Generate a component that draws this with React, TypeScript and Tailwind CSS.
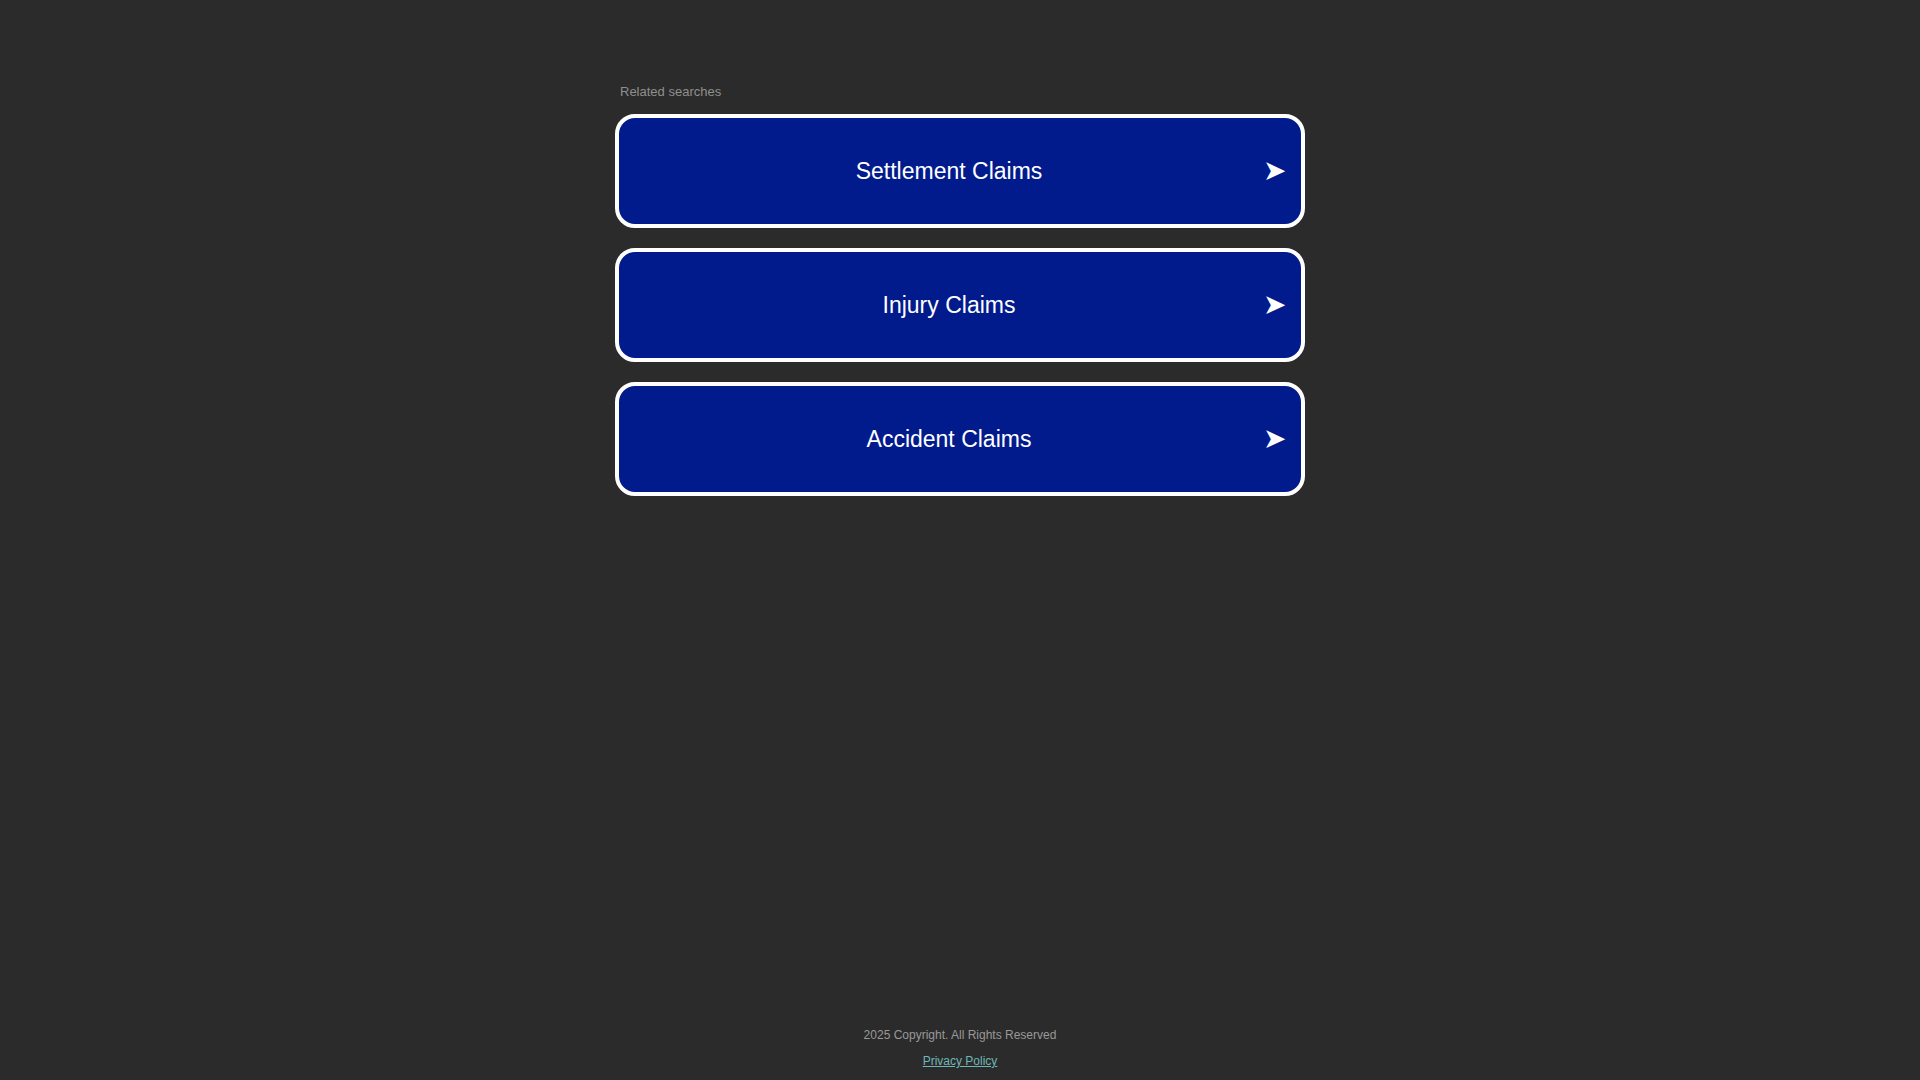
import React from "react";

const links = ["Settlement Claims", "Injury Claims", "Accident Claims"];

const App: React.FC = () => {
  return (
    <div className="min-h-screen w-full bg-[#2b2b2b] flex flex-col font-['Liberation_Sans',Arial,sans-serif]">
      <main className="w-[690px] mx-auto pt-[83px] flex-1">
        <p className="text-[13px] leading-[18px] text-[#8f8f8f] pl-[5px] mb-[13px]">Related searches</p>
        <div className="flex flex-col gap-[20px]">
          {links.map((label) => (
            <a
              key={label}
              href="#"
              className="relative flex items-center justify-center h-[114px] rounded-[20px] border-[4px] border-white bg-[#011b8c] text-white"
            >
              <span className="text-[23px] leading-[28px] pr-[22px]">{label}</span>
              <span className="absolute right-[15px] top-1/2 -translate-y-1/2 text-[28px] leading-[28px]">➤</span>
            </a>
          ))}
        </div>
      </main>
      <footer className="flex flex-col items-center pb-[11px]">
        <p className="text-[12px] leading-[16px] text-[#999999]">2025 Copyright. All Rights Reserved</p>
        <a href="#" className="mt-[10px] text-[12px] leading-[16px] text-[#6fb6b6] underline">
          Privacy Policy
        </a>
      </footer>
    </div>
  );
};

export default App;
